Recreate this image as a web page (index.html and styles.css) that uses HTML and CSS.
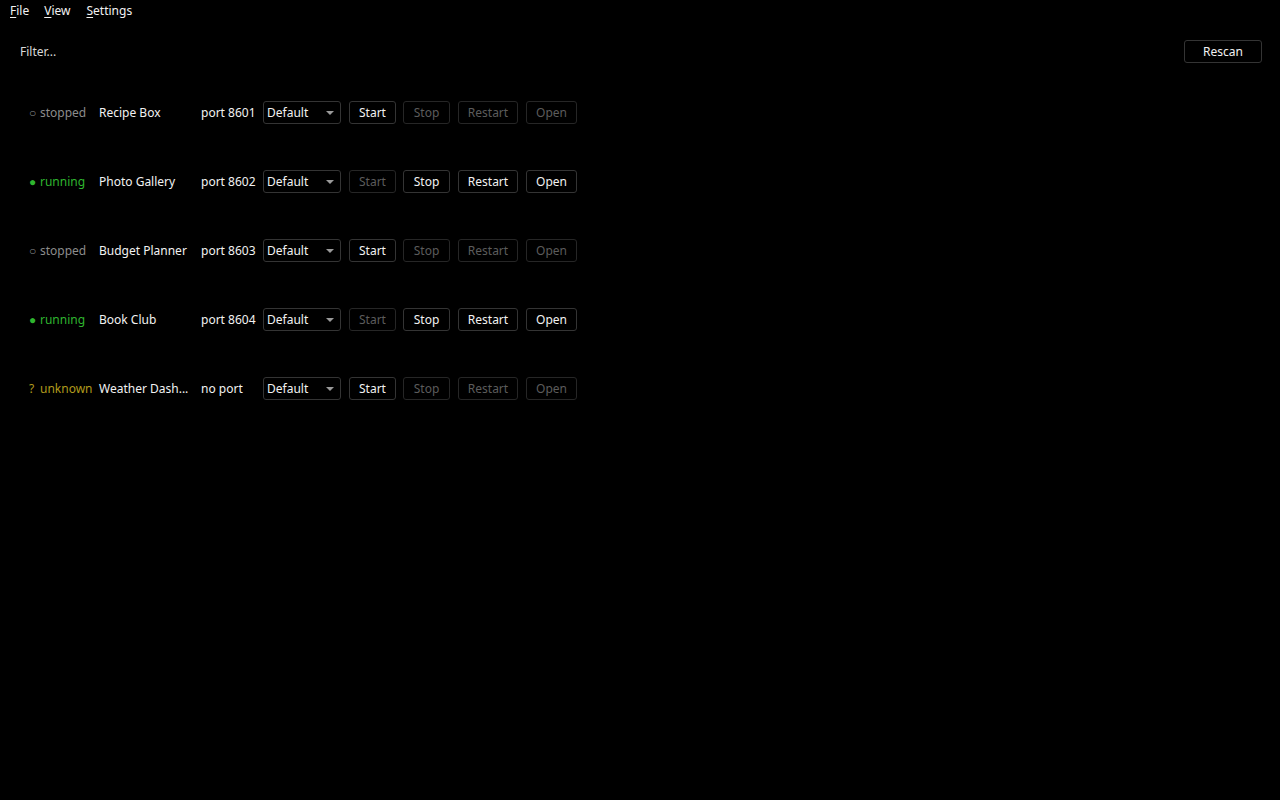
FILE: index.html
```html
<!DOCTYPE html>
<html>
<head>
<meta charset="utf-8">
<link rel="stylesheet" href="styles.css">
</head>
<body>
<div class="menubar">
  <span class="menu"><u>F</u>ile</span>
  <span class="menu"><u>V</u>iew</span>
  <span class="menu"><u>S</u>ettings</span>
</div>
<div class="toolbar">
  <span class="filter">Filter...</span>
  <button class="btn rescan">Rescan</button>
</div>
<div class="list">
  <div class="row">
    <span class="status stopped"><span class="ico">○</span>stopped</span>
    <span class="name">Recipe Box</span>
    <span class="port">port 8601</span>
    <div class="select">Default<span class="arrow"></span></div>
    <button class="btn">Start</button>
    <button class="btn off">Stop</button>
    <button class="btn off">Restart</button>
    <button class="btn off">Open</button>
  </div>
  <div class="row">
    <span class="status running"><span class="ico">●</span>running</span>
    <span class="name">Photo Gallery</span>
    <span class="port">port 8602</span>
    <div class="select">Default<span class="arrow"></span></div>
    <button class="btn off">Start</button>
    <button class="btn">Stop</button>
    <button class="btn">Restart</button>
    <button class="btn">Open</button>
  </div>
  <div class="row">
    <span class="status stopped"><span class="ico">○</span>stopped</span>
    <span class="name">Budget Planner</span>
    <span class="port">port 8603</span>
    <div class="select">Default<span class="arrow"></span></div>
    <button class="btn">Start</button>
    <button class="btn off">Stop</button>
    <button class="btn off">Restart</button>
    <button class="btn off">Open</button>
  </div>
  <div class="row">
    <span class="status running"><span class="ico">●</span>running</span>
    <span class="name">Book Club</span>
    <span class="port">port 8604</span>
    <div class="select">Default<span class="arrow"></span></div>
    <button class="btn off">Start</button>
    <button class="btn">Stop</button>
    <button class="btn">Restart</button>
    <button class="btn">Open</button>
  </div>
  <div class="row">
    <span class="status unknown"><span class="ico">?</span>unknown</span>
    <span class="name">Weather Dash...</span>
    <span class="port">no port</span>
    <div class="select">Default<span class="arrow"></span></div>
    <button class="btn">Start</button>
    <button class="btn off">Stop</button>
    <button class="btn off">Restart</button>
    <button class="btn off">Open</button>
  </div>
</div>
</body>
</html>
```
FILE: styles.css
```css
html, body {
  margin: 0;
  padding: 0;
  background: #000;
  color: #f2f2f2;
  font-family: "Noto Sans", "Open Sans", sans-serif;
  font-size: 12px;
  width: 1280px;
  height: 800px;
  overflow: hidden;
}
.menubar {
  display: flex;
  height: 20px;
  align-items: center;
  padding-left: 10px;
  gap: 15px;
}
.menu:last-child { margin-left: 1px; }
.menu u { text-decoration-thickness: 1px; text-underline-offset: 2px; }
.toolbar {
  display: flex;
  justify-content: space-between;
  align-items: center;
  padding: 20px 18px 0 20px;
}
.filter { color: #d8d8d8; }
.btn {
  font-family: inherit;
  font-size: 12px;
  background: #000;
  color: #f2f2f2;
  border: 1px solid #343434;
  border-radius: 3px;
  height: 23px;
  padding: 0 6px;
  line-height: 21px;
  margin: 0;
}
.btn.off { color: #5c5c5c; border-color: #262626; }
.rescan { width: 78px; }
.list {
  padding: 38px 0 0 29px;
  display: flex;
  flex-direction: column;
  gap: 46px;
}
.row {
  display: flex;
  align-items: center;
  height: 23px;
}
.status { width: 70px; white-space: nowrap; display: flex; }
.ico { width: 11px; flex: none; }
.stopped { color: #8c8c8c; }
.running { color: #2fb52f; }
.unknown { color: #b09a1c; }
.name { width: 102px; white-space: nowrap; }
.port { width: 62px; white-space: nowrap; }
.select {
  width: 78px;
  height: 23px;
  box-sizing: border-box;
  border: 1px solid #343434;
  border-radius: 3px;
  padding-left: 3px;
  display: flex;
  align-items: center;
  justify-content: space-between;
  padding-right: 6px;
  margin-right: 8px;
}
.arrow {
  width: 0;
  height: 0;
  border-left: 4px solid transparent;
  border-right: 4px solid transparent;
  border-top: 4px solid #9a9a9a;
}
.row .btn { margin-right: 8px; }
.row .btn:nth-of-type(1) { width: 47px; margin-right: 7px; }
.row .btn:nth-of-type(2) { width: 47px; }
.row .btn:nth-of-type(3) { width: 60px; }
.row .btn:nth-of-type(4) { width: 51px; }
```
